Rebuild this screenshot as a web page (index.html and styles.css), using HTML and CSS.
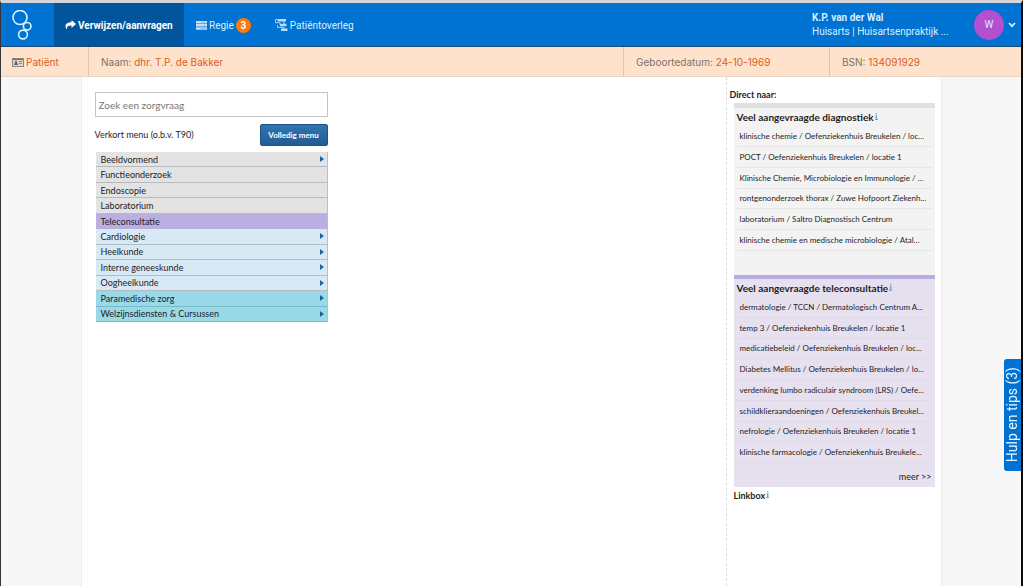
FILE: index.html
```html
<!DOCTYPE html>
<html lang="nl">
<head>
<meta charset="utf-8">
<title>Verwijzen/aanvragen</title>
<link rel="stylesheet" href="styles.css">
</head>
<body>
<header class="topbar">
  <a class="logo" href="#" aria-label="Home">
    <svg width="22" height="32" viewBox="0 0 22 32" fill="none" stroke="#d9f3ff" stroke-width="1.6"><circle cx="8" cy="7.500" r="7"/><circle cx="15.200" cy="16.300" r="3.800"/><circle cx="11" cy="24.500" r="4.400"/></svg>
  </a>
  <nav class="tabs">
    <a class="tab active" href="#">
      <svg width="11" height="10" viewBox="0 0 11 10" fill="#fff"><path d="M6.500 0 L11 4 L6.500 8 V5.600 C3.500 5.400 2.200 6.300 1.600 9.400 C-1 5.500 1.200 2.300 6.500 2.300 Z"/></svg>
      <span>Verwijzen/aanvragen</span>
    </a>
    <a class="tab regie" href="#">
      <svg width="11" height="9" viewBox="0 0 11 9"><path fill="#c6e2f8" d="M0 0h11v2.500H0zM0 3.100h11v2.500H0zM0 6.200h11v2.500H0z"/><path stroke="#7db5e8" stroke-width=".8" d="M5.500 1.200h4M7.500 4.400h2M4.500 7.500h5"/></svg>
      <span>Regie</span>
      <span class="badge">3</span>
    </a>
    <a class="tab overleg" href="#">
      <svg width="13" height="14" viewBox="0 0 13 14" fill="none" stroke="#b9dbf5"><path stroke-width="2.400" d="M2.500 2.200h8.500M5 7h6.500M6 11.700h6.500"/><path stroke-width=".9" d="M2.500 1.500H.6v3.200H5V7M9 3v3M2.500 7v2.400h6.500v2"/></svg>
      <span>Patiëntoverleg</span>
    </a>
  </nav>
  <button class="user" type="button">
    <span class="who"><strong>K.P. van der Wal</strong><span>Huisarts | Huisartsenpraktijk ...</span></span>
    <span class="avatar">W</span>
    <svg width="8" height="6" viewBox="0 0 8 6" fill="none" stroke="#d9f3ff" stroke-width="1.700"><path d="M1 1l3 3.200L7 1"/></svg>
  </button>
</header>
<section class="patient">
  <div class="cell first">
    <svg width="12" height="9" viewBox="0 0 12 9"><rect x=".5" y=".5" width="11" height="8" fill="#e6d3c4" stroke="#8b8a8a"/><path fill="#666a72" d="M1 1h10v1H1zM2 7c0-1.500.5-2 1.200-2.100a1.200 1.200 0 1 1 1.600 0C5.500 5 6 5.500 6 7z"/><path stroke="#8b8a8a" d="M7 3.500h3M7 5.500h3"/></svg>
    <b>Patiënt</b>
  </div>
  <div class="cell">Naam: <b>dhr. T.P. de Bakker</b></div>
  <div class="cell">Geboortedatum: <b>24-10-1969</b></div>
  <div class="cell">BSN: <b>134091929</b></div>
</section>
<main class="page">
  <section class="finder">
    <input class="search" type="text" placeholder="Zoek een zorgvraag" aria-label="Zoek een zorgvraag">
    <div class="menuhead"><span>Verkort menu (o.b.v. T90)</span><button class="full" type="button">Volledig menu</button></div>
    <ul class="menu">
      <li class="grey more"><a href="#">Beeldvormend</a></li>
      <li class="grey"><a href="#">Functieonderzoek</a></li>
      <li class="grey"><a href="#">Endoscopie</a></li>
      <li class="grey"><a href="#">Laboratorium</a></li>
      <li class="purple"><a href="#">Teleconsultatie</a></li>
      <li class="blue more"><a href="#">Cardiologie</a></li>
      <li class="blue more"><a href="#">Heelkunde</a></li>
      <li class="blue more"><a href="#">Interne geneeskunde</a></li>
      <li class="blue more"><a href="#">Oogheelkunde</a></li>
      <li class="teal more"><a href="#">Paramedische zorg</a></li>
      <li class="teal more"><a href="#">Welzijnsdiensten &amp; Cursussen</a></li>
    </ul>
  </section>
  <aside class="side">
    <h2 class="direct">Direct naar:</h2>
    <section class="box diag">
      <h3>Veel aangevraagde diagnostiek<a class="info" href="#">i</a></h3>
      <ul class="links six">
        <li><a href="#">klinische chemie / Oefenziekenhuis Breukelen / loc...</a></li>
        <li><a href="#">POCT / Oefenziekenhuis Breukelen / locatie 1</a></li>
        <li><a href="#">Klinische Chemie, Microbiologie en Immunologie / ...</a></li>
        <li><a href="#">rontgenonderzoek thorax / Zuwe Hofpoort Ziekenh...</a></li>
        <li><a href="#">laboratorium / Saltro Diagnostisch Centrum</a></li>
        <li><a href="#">klinische chemie en medische microbiologie / Atal...</a></li>
      </ul>
    </section>
    <section class="box tele">
      <h3>Veel aangevraagde teleconsultatie<a class="info" href="#">i</a></h3>
      <ul class="links eight">
        <li><a href="#">dermatologie / TCCN / Dermatologisch Centrum A...</a></li>
        <li><a href="#">temp 3 / Oefenziekenhuis Breukelen / locatie 1</a></li>
        <li><a href="#">medicatiebeleid / Oefenziekenhuis Breukelen / loc...</a></li>
        <li><a href="#">Diabetes Mellitus / Oefenziekenhuis Breukelen / lo...</a></li>
        <li><a href="#">verdenking lumbo radiculair syndroom (LRS) / Oefe...</a></li>
        <li><a href="#">schildklieraandoeningen / Oefenziekenhuis Breukel...</a></li>
        <li><a href="#">nefrologie / Oefenziekenhuis Breukelen / locatie 1</a></li>
        <li><a href="#">klinische farmacologie / Oefenziekenhuis Breukele...</a></li>
      </ul>
      <a class="meer" href="#">meer &gt;&gt;</a>
    </section>
    <h3 class="linkbox">Linkbox<a class="info" href="#">i</a></h3>
  </aside>
</main>
<button class="help" type="button">Hulp en tips (3)</button>
</body>
</html>
```
FILE: styles.css
```css
* { box-sizing: border-box; }
body {
  margin: 0;
  min-height: 100vh;
  display: flex;
  flex-direction: column;
  background: #f7f7f7;
  border-top: 3px solid #d6d4d6;
  border-left: 1px solid #33343c;
  border-right: 2px solid #0b0b0d;
  font-family: Lato, "Open Sans", sans-serif;
  font-size: 9px;
  color: #1d1d1f;
}
a { color: inherit; text-decoration: none; }
ul, h2, h3 { margin: 0; padding: 0; list-style: none; }
button { font-family: inherit; border: 0; cursor: pointer; }
svg { flex: none; }

.topbar {
  display: flex;
  height: 44px;
  background: #0072d2;
  border-bottom: 1px solid #1c4a78;
  font-family: Roboto, Inter, sans-serif;
  font-size: 10px;
  color: #d9efff;
}
.logo { width: 53px; padding: 7px 0 0 11px; }
.tabs { display: flex; flex: 1; }
.tab { display: flex; align-items: center; gap: 3px; padding: 1px 12px 0; }
.tab.active { width: 130px; padding: 1px 11px 0; gap: 2px; background: #00559d; color: #fff; font-weight: 700; }
.tab.regie { padding-right: 12px; gap: 2px; }
.tab.overleg { gap: 2px; }
.badge {
  width: 15px;
  height: 15px;
  border-radius: 50%;
  background: #ff7a0a;
  color: #fff;
  font-weight: 700;
  line-height: 15px;
  text-align: center;
}
.user {
  display: flex;
  align-items: center;
  padding: 0 5px 0 0;
  background: none;
  font-size: 10px;
  color: #d9efff;
  text-align: left;
}
.who { display: flex; flex-direction: column; width: 162px; padding-top: 1px; line-height: 14px; }
.who strong { font-weight: 700; }
.avatar {
  width: 30px;
  height: 30px;
  margin-right: 4px;
  border-radius: 50%;
  background: #b44fd0;
  line-height: 29px;
  text-align: center;
}

.patient {
  display: grid;
  grid-template-columns: 87px 1fr 206px 192px;
  height: 30px;
  background: #fee2cb;
  border-bottom: 1px solid #e8d5c6;
  font-family: Inter, Roboto, sans-serif;
  font-size: 10px;
  color: #7b746e;
}
.patient b { font-weight: 400; color: #d95f1e; }
.cell { padding-left: 12px; line-height: 30px; border-left: 1px solid #dfc5b0; white-space: nowrap; }
.cell.first { display: flex; align-items: center; gap: 2px; padding-left: 11px; border-left: 0; }

.page {
  flex: 1;
  display: flex;
  width: 100%;
  max-width: 861px;
  margin: 0 auto;
  background: #fff;
  border-left: 1px solid #ececec;
  border-right: 1px solid #ececec;
}
.finder { width: 246px; margin-right: auto; padding: 15px 0 0 13px; }
.search {
  display: block;
  width: 100%;
  height: 25px;
  padding: 0 3px;
  border: 1px solid #c4c4c4;
  font-family: inherit;
  font-size: 10px;
}
.search::placeholder { color: #777; opacity: 1; }
.menuhead { display: flex; align-items: center; justify-content: space-between; margin-top: 7px; line-height: 10px; }
.full {
  width: 68px;
  height: 22px;
  padding: 0;
  border: 1px solid #1d5384;
  border-radius: 2px;
  background: linear-gradient(#2f75b2, #235c93);
  color: #fff;
  font-size: 8px;
  font-weight: 700;
}
.menu { display: grid; grid-auto-rows: 1fr; height: 170px; margin: 6px 0 0 1px; border: solid #b9bfc4; border-width: 0 1px 0 0; }
.menu li { display: flex; align-items: center; justify-content: space-between; padding: 0 3px 0 5px; border-bottom: 1px solid #b5bbc0; }
.menu a { flex: 1; }
.more::after { content: ""; border: solid transparent; border-width: 3px 0 3px 4px; border-left-color: #1a679f; }
.grey { background: #e3e3e3; }
.purple { background: #bbaee1; }
.menu .purple { border-bottom-color: #bbaee1; }
.blue { background: #d8e9f6; }
.teal { background: #99d9e8; }
.menu .teal { border-bottom-color: #78b9ca; }

.side { width: 215px; padding: 11px 6px 0 7px; border-left: 1px dashed #ddd; }
.direct { margin-left: -4px; font-size: 9px; line-height: 13px; }
.box { padding: 0 3px; border-top: 5px solid #e0e0e0; }
.diag { height: 172px; margin-top: 2px; background: #f3f3f3; }
.tele { height: 212px; border-top: 4px solid #b9ace0; background: #e7e0ef; }
h3 { font-size: 10px; line-height: 18px; }
.info {
  display: inline-block;
  width: 3px;
  margin-left: 1px;
  border-bottom: 1px solid #6ea9d8;
  color: #1c7cc7;
  font-size: 7px;
  font-weight: 700;
  line-height: 6px;
  text-align: center;
  vertical-align: 2px;
}
.links { display: grid; grid-auto-rows: 1fr; }
.six { height: 125px; }
.eight { height: 166px; }
.links li { display: flex; align-items: center; padding-left: 3px; border-bottom: 1px solid #e5e5e5; white-space: nowrap; font-size: 8px; }
.eight li { border-bottom-color: #e0dae8; }
.meer { display: block; padding-top: 8px; text-align: right; }
.linkbox { font-size: 9px; line-height: 18px; }

.help {
  position: fixed;
  right: 2px;
  top: 359px;
  width: 17px;
  height: 112px;
  padding: 0;
  border-radius: 3px 0 0 3px;
  background: #0072d2;
  color: #eaf6ff;
  font-family: Roboto, sans-serif;
  font-size: 14px;
  line-height: 17px;
  writing-mode: sideways-lr;
  white-space: nowrap;
}
```
